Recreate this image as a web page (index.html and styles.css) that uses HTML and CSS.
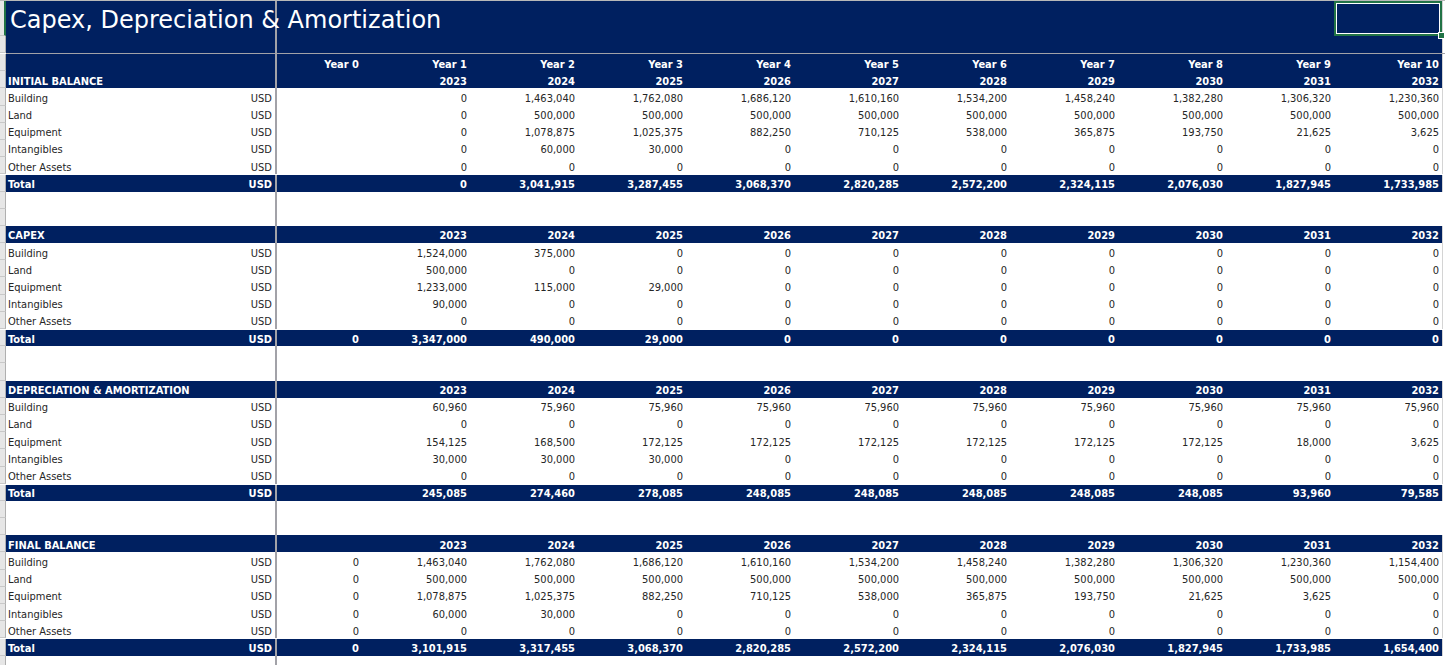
FILE: index.html
```html
<!DOCTYPE html>
<html>
<head>
<meta charset="utf-8">
<link rel="stylesheet" href="styles.css">
</head>
<body>
<div class="sheet">
  <div class="row title-row">
    <div class="gut gut-sel"></div>
    <div class="lab title-cell"><span class="title">Capex, Depreciation &amp; Amortization</span></div>
    <div class="div"></div>
    <div class="c"></div><div class="c"></div><div class="c"></div><div class="c"></div><div class="c"></div><div class="c"></div><div class="c"></div><div class="c"></div><div class="c"></div><div class="c"></div><div class="c sel"><span class="handle"></span></div>
    <div class="rest"></div>
  </div>
  <div class="row title-row2">
    <div class="gut"></div>
    <div class="lab"></div>
    <div class="div"></div>
    <div class="c"></div><div class="c"></div><div class="c"></div><div class="c"></div><div class="c"></div><div class="c"></div><div class="c"></div><div class="c"></div><div class="c"></div><div class="c"></div><div class="c"></div>
    <div class="rest"></div>
  </div>
  <div class="freeze"></div>

  <div class="row hd">
    <div class="gut"></div>
    <div class="lab"></div>
    <div class="div"></div>
    <div class="c">Year 0</div><div class="c">Year 1</div><div class="c">Year 2</div><div class="c">Year 3</div><div class="c">Year 4</div><div class="c">Year 5</div><div class="c">Year 6</div><div class="c">Year 7</div><div class="c">Year 8</div><div class="c">Year 9</div><div class="c">Year 10</div>
    <div class="rest"></div>
  </div>
  <div class="row hd">
    <div class="gut"></div>
    <div class="lab"><span>INITIAL BALANCE</span></div>
    <div class="div"></div>
    <div class="c"></div><div class="c">2023</div><div class="c">2024</div><div class="c">2025</div><div class="c">2026</div><div class="c">2027</div><div class="c">2028</div><div class="c">2029</div><div class="c">2030</div><div class="c">2031</div><div class="c">2032</div>
    <div class="rest"></div>
  </div>
  <div class="row">
    <div class="gut"></div><div class="lab"><span>Building</span><span>USD</span></div><div class="div"></div>
    <div class="c"></div><div class="c">0</div><div class="c">1,463,040</div><div class="c">1,762,080</div><div class="c">1,686,120</div><div class="c">1,610,160</div><div class="c">1,534,200</div><div class="c">1,458,240</div><div class="c">1,382,280</div><div class="c">1,306,320</div><div class="c">1,230,360</div>
    <div class="rest"></div>
  </div>
  <div class="row">
    <div class="gut"></div><div class="lab"><span>Land</span><span>USD</span></div><div class="div"></div>
    <div class="c"></div><div class="c">0</div><div class="c">500,000</div><div class="c">500,000</div><div class="c">500,000</div><div class="c">500,000</div><div class="c">500,000</div><div class="c">500,000</div><div class="c">500,000</div><div class="c">500,000</div><div class="c">500,000</div>
    <div class="rest"></div>
  </div>
  <div class="row">
    <div class="gut"></div><div class="lab"><span>Equipment</span><span>USD</span></div><div class="div"></div>
    <div class="c"></div><div class="c">0</div><div class="c">1,078,875</div><div class="c">1,025,375</div><div class="c">882,250</div><div class="c">710,125</div><div class="c">538,000</div><div class="c">365,875</div><div class="c">193,750</div><div class="c">21,625</div><div class="c">3,625</div>
    <div class="rest"></div>
  </div>
  <div class="row">
    <div class="gut"></div><div class="lab"><span>Intangibles</span><span>USD</span></div><div class="div"></div>
    <div class="c"></div><div class="c">0</div><div class="c">60,000</div><div class="c">30,000</div><div class="c">0</div><div class="c">0</div><div class="c">0</div><div class="c">0</div><div class="c">0</div><div class="c">0</div><div class="c">0</div>
    <div class="rest"></div>
  </div>
  <div class="row">
    <div class="gut"></div><div class="lab"><span>Other Assets</span><span>USD</span></div><div class="div"></div>
    <div class="c"></div><div class="c">0</div><div class="c">0</div><div class="c">0</div><div class="c">0</div><div class="c">0</div><div class="c">0</div><div class="c">0</div><div class="c">0</div><div class="c">0</div><div class="c">0</div>
    <div class="rest"></div>
  </div>
  <div class="row tot">
    <div class="gut"></div><div class="lab"><span>Total</span><span>USD</span></div><div class="div"></div>
    <div class="c"></div><div class="c">0</div><div class="c">3,041,915</div><div class="c">3,287,455</div><div class="c">3,068,370</div><div class="c">2,820,285</div><div class="c">2,572,200</div><div class="c">2,324,115</div><div class="c">2,076,030</div><div class="c">1,827,945</div><div class="c">1,733,985</div>
    <div class="rest"></div>
  </div>
  <div class="row blank"><div class="gut"></div><div class="lab"></div><div class="div"></div><div class="fill"></div></div>
  <div class="row blank"><div class="gut"></div><div class="lab"></div><div class="div"></div><div class="fill"></div></div>

  <div class="row hd">
    <div class="gut"></div>
    <div class="lab"><span>CAPEX</span></div>
    <div class="div"></div>
    <div class="c"></div><div class="c">2023</div><div class="c">2024</div><div class="c">2025</div><div class="c">2026</div><div class="c">2027</div><div class="c">2028</div><div class="c">2029</div><div class="c">2030</div><div class="c">2031</div><div class="c">2032</div>
    <div class="rest"></div>
  </div>
  <div class="row">
    <div class="gut"></div><div class="lab"><span>Building</span><span>USD</span></div><div class="div"></div>
    <div class="c"></div><div class="c">1,524,000</div><div class="c">375,000</div><div class="c">0</div><div class="c">0</div><div class="c">0</div><div class="c">0</div><div class="c">0</div><div class="c">0</div><div class="c">0</div><div class="c">0</div>
    <div class="rest"></div>
  </div>
  <div class="row">
    <div class="gut"></div><div class="lab"><span>Land</span><span>USD</span></div><div class="div"></div>
    <div class="c"></div><div class="c">500,000</div><div class="c">0</div><div class="c">0</div><div class="c">0</div><div class="c">0</div><div class="c">0</div><div class="c">0</div><div class="c">0</div><div class="c">0</div><div class="c">0</div>
    <div class="rest"></div>
  </div>
  <div class="row">
    <div class="gut"></div><div class="lab"><span>Equipment</span><span>USD</span></div><div class="div"></div>
    <div class="c"></div><div class="c">1,233,000</div><div class="c">115,000</div><div class="c">29,000</div><div class="c">0</div><div class="c">0</div><div class="c">0</div><div class="c">0</div><div class="c">0</div><div class="c">0</div><div class="c">0</div>
    <div class="rest"></div>
  </div>
  <div class="row">
    <div class="gut"></div><div class="lab"><span>Intangibles</span><span>USD</span></div><div class="div"></div>
    <div class="c"></div><div class="c">90,000</div><div class="c">0</div><div class="c">0</div><div class="c">0</div><div class="c">0</div><div class="c">0</div><div class="c">0</div><div class="c">0</div><div class="c">0</div><div class="c">0</div>
    <div class="rest"></div>
  </div>
  <div class="row">
    <div class="gut"></div><div class="lab"><span>Other Assets</span><span>USD</span></div><div class="div"></div>
    <div class="c"></div><div class="c">0</div><div class="c">0</div><div class="c">0</div><div class="c">0</div><div class="c">0</div><div class="c">0</div><div class="c">0</div><div class="c">0</div><div class="c">0</div><div class="c">0</div>
    <div class="rest"></div>
  </div>
  <div class="row tot">
    <div class="gut"></div><div class="lab"><span>Total</span><span>USD</span></div><div class="div"></div>
    <div class="c">0</div><div class="c">3,347,000</div><div class="c">490,000</div><div class="c">29,000</div><div class="c">0</div><div class="c">0</div><div class="c">0</div><div class="c">0</div><div class="c">0</div><div class="c">0</div><div class="c">0</div>
    <div class="rest"></div>
  </div>
  <div class="row blank"><div class="gut"></div><div class="lab"></div><div class="div"></div><div class="fill"></div></div>
  <div class="row blank"><div class="gut"></div><div class="lab"></div><div class="div"></div><div class="fill"></div></div>

  <div class="row hd">
    <div class="gut"></div>
    <div class="lab"><span>DEPRECIATION &amp; AMORTIZATION</span></div>
    <div class="div"></div>
    <div class="c"></div><div class="c">2023</div><div class="c">2024</div><div class="c">2025</div><div class="c">2026</div><div class="c">2027</div><div class="c">2028</div><div class="c">2029</div><div class="c">2030</div><div class="c">2031</div><div class="c">2032</div>
    <div class="rest"></div>
  </div>
  <div class="row">
    <div class="gut"></div><div class="lab"><span>Building</span><span>USD</span></div><div class="div"></div>
    <div class="c"></div><div class="c">60,960</div><div class="c">75,960</div><div class="c">75,960</div><div class="c">75,960</div><div class="c">75,960</div><div class="c">75,960</div><div class="c">75,960</div><div class="c">75,960</div><div class="c">75,960</div><div class="c">75,960</div>
    <div class="rest"></div>
  </div>
  <div class="row">
    <div class="gut"></div><div class="lab"><span>Land</span><span>USD</span></div><div class="div"></div>
    <div class="c"></div><div class="c">0</div><div class="c">0</div><div class="c">0</div><div class="c">0</div><div class="c">0</div><div class="c">0</div><div class="c">0</div><div class="c">0</div><div class="c">0</div><div class="c">0</div>
    <div class="rest"></div>
  </div>
  <div class="row">
    <div class="gut"></div><div class="lab"><span>Equipment</span><span>USD</span></div><div class="div"></div>
    <div class="c"></div><div class="c">154,125</div><div class="c">168,500</div><div class="c">172,125</div><div class="c">172,125</div><div class="c">172,125</div><div class="c">172,125</div><div class="c">172,125</div><div class="c">172,125</div><div class="c">18,000</div><div class="c">3,625</div>
    <div class="rest"></div>
  </div>
  <div class="row">
    <div class="gut"></div><div class="lab"><span>Intangibles</span><span>USD</span></div><div class="div"></div>
    <div class="c"></div><div class="c">30,000</div><div class="c">30,000</div><div class="c">30,000</div><div class="c">0</div><div class="c">0</div><div class="c">0</div><div class="c">0</div><div class="c">0</div><div class="c">0</div><div class="c">0</div>
    <div class="rest"></div>
  </div>
  <div class="row">
    <div class="gut"></div><div class="lab"><span>Other Assets</span><span>USD</span></div><div class="div"></div>
    <div class="c"></div><div class="c">0</div><div class="c">0</div><div class="c">0</div><div class="c">0</div><div class="c">0</div><div class="c">0</div><div class="c">0</div><div class="c">0</div><div class="c">0</div><div class="c">0</div>
    <div class="rest"></div>
  </div>
  <div class="row tot">
    <div class="gut"></div><div class="lab"><span>Total</span><span>USD</span></div><div class="div"></div>
    <div class="c"></div><div class="c">245,085</div><div class="c">274,460</div><div class="c">278,085</div><div class="c">248,085</div><div class="c">248,085</div><div class="c">248,085</div><div class="c">248,085</div><div class="c">248,085</div><div class="c">93,960</div><div class="c">79,585</div>
    <div class="rest"></div>
  </div>
  <div class="row blank"><div class="gut"></div><div class="lab"></div><div class="div"></div><div class="fill"></div></div>
  <div class="row blank"><div class="gut"></div><div class="lab"></div><div class="div"></div><div class="fill"></div></div>

  <div class="row hd">
    <div class="gut"></div>
    <div class="lab"><span>FINAL BALANCE</span></div>
    <div class="div"></div>
    <div class="c"></div><div class="c">2023</div><div class="c">2024</div><div class="c">2025</div><div class="c">2026</div><div class="c">2027</div><div class="c">2028</div><div class="c">2029</div><div class="c">2030</div><div class="c">2031</div><div class="c">2032</div>
    <div class="rest"></div>
  </div>
  <div class="row">
    <div class="gut"></div><div class="lab"><span>Building</span><span>USD</span></div><div class="div"></div>
    <div class="c">0</div><div class="c">1,463,040</div><div class="c">1,762,080</div><div class="c">1,686,120</div><div class="c">1,610,160</div><div class="c">1,534,200</div><div class="c">1,458,240</div><div class="c">1,382,280</div><div class="c">1,306,320</div><div class="c">1,230,360</div><div class="c">1,154,400</div>
    <div class="rest"></div>
  </div>
  <div class="row">
    <div class="gut"></div><div class="lab"><span>Land</span><span>USD</span></div><div class="div"></div>
    <div class="c">0</div><div class="c">500,000</div><div class="c">500,000</div><div class="c">500,000</div><div class="c">500,000</div><div class="c">500,000</div><div class="c">500,000</div><div class="c">500,000</div><div class="c">500,000</div><div class="c">500,000</div><div class="c">500,000</div>
    <div class="rest"></div>
  </div>
  <div class="row">
    <div class="gut"></div><div class="lab"><span>Equipment</span><span>USD</span></div><div class="div"></div>
    <div class="c">0</div><div class="c">1,078,875</div><div class="c">1,025,375</div><div class="c">882,250</div><div class="c">710,125</div><div class="c">538,000</div><div class="c">365,875</div><div class="c">193,750</div><div class="c">21,625</div><div class="c">3,625</div><div class="c">0</div>
    <div class="rest"></div>
  </div>
  <div class="row">
    <div class="gut"></div><div class="lab"><span>Intangibles</span><span>USD</span></div><div class="div"></div>
    <div class="c">0</div><div class="c">60,000</div><div class="c">30,000</div><div class="c">0</div><div class="c">0</div><div class="c">0</div><div class="c">0</div><div class="c">0</div><div class="c">0</div><div class="c">0</div><div class="c">0</div>
    <div class="rest"></div>
  </div>
  <div class="row">
    <div class="gut"></div><div class="lab"><span>Other Assets</span><span>USD</span></div><div class="div"></div>
    <div class="c">0</div><div class="c">0</div><div class="c">0</div><div class="c">0</div><div class="c">0</div><div class="c">0</div><div class="c">0</div><div class="c">0</div><div class="c">0</div><div class="c">0</div><div class="c">0</div>
    <div class="rest"></div>
  </div>
  <div class="row tot">
    <div class="gut"></div><div class="lab"><span>Total</span><span>USD</span></div><div class="div"></div>
    <div class="c">0</div><div class="c">3,101,915</div><div class="c">3,317,455</div><div class="c">3,068,370</div><div class="c">2,820,285</div><div class="c">2,572,200</div><div class="c">2,324,115</div><div class="c">2,076,030</div><div class="c">1,827,945</div><div class="c">1,733,985</div><div class="c">1,654,400</div>
    <div class="rest"></div>
  </div>
  <div class="row blank"><div class="gut"></div><div class="lab"></div><div class="div"></div><div class="fill"></div></div>
</div>
</body>
</html>
```
FILE: styles.css
```css
html, body {
  margin: 0;
  padding: 0;
  background: #ffffff;
  overflow: hidden;
}
.sheet {
  width: 1445px;
  height: 665px;
  overflow: hidden;
  display: flex;
  flex-direction: column;
  font-family: "DejaVu Sans", "Liberation Sans", sans-serif;
  font-stretch: condensed;
  font-size: 11px;
  color: #262626;
}
.row {
  display: grid;
  grid-template-columns: 6px 269px 2px 85px repeat(10, 108px) 1fr;
  grid-template-rows: 100%;
  height: 17.2px;
  flex: none;
}
.row.blank {
  grid-template-columns: 6px 269px 2px 1fr;
}
.gut {
  background: #e6e6e6;
  border-right: 1px solid #b0b0b0;
  border-bottom: 1px solid #c8c8c8;
  box-sizing: border-box;
}
.gut-sel {
  border-right: 2px solid #217346;
}
.lab {
  display: flex;
  justify-content: space-between;
  padding: 3.5px 3px 0 2px;
  line-height: 13.7px;
  box-sizing: border-box;
  white-space: nowrap;
  overflow: visible;
}
.div {
  background: #a2a2a8;
}
.c {
  text-align: right;
  padding: 3.5px 3px 0 0;
  line-height: 13.7px;
  box-sizing: border-box;
  white-space: nowrap;
}
.rest {
  background: #ffffff;
  border-left: 1px solid #d4d4d4;
}

.title-row {
  height: 36px;
  border-top: 1px solid #b8b8b8;
  box-sizing: border-box;
}
.title-row .lab, .title-row .c, .title-row2 .lab, .title-row2 .c {
  background: #002060;
}
.title-row2 {
  height: 17px;
}
.title-cell {
  position: relative;
  z-index: 2;
  padding: 1px 0 0 4px;
  line-height: 36px;
}
.title {
  font-size: 24px;
  color: #ffffff;
  font-stretch: normal;
  line-height: 36px;
}
.title-row .sel {
  position: relative;
  border: 2px solid #217346;
  box-shadow: inset 0 0 0 1px #ffffff;
  box-sizing: border-box;
  padding: 0;
}
.handle {
  position: absolute;
  right: -5px;
  bottom: -5px;
  width: 5px;
  height: 5px;
  background: #217346;
  border: 1px solid #ffffff;
}
.freeze {
  height: 1px;
  flex: none;
  background: #a2a2a8;
  margin-left: 6px;
}

.hd .lab, .hd .c, .tot .lab, .tot .c {
  background: #002060;
  color: #ffffff;
  font-weight: bold;
}
.tot {
  border-top: 1px solid #ffffff;
  box-sizing: border-box;
}
.tot .lab, .tot .c {
  padding-top: 2.5px;
}
.fill {
  background: #ffffff;
}
```
